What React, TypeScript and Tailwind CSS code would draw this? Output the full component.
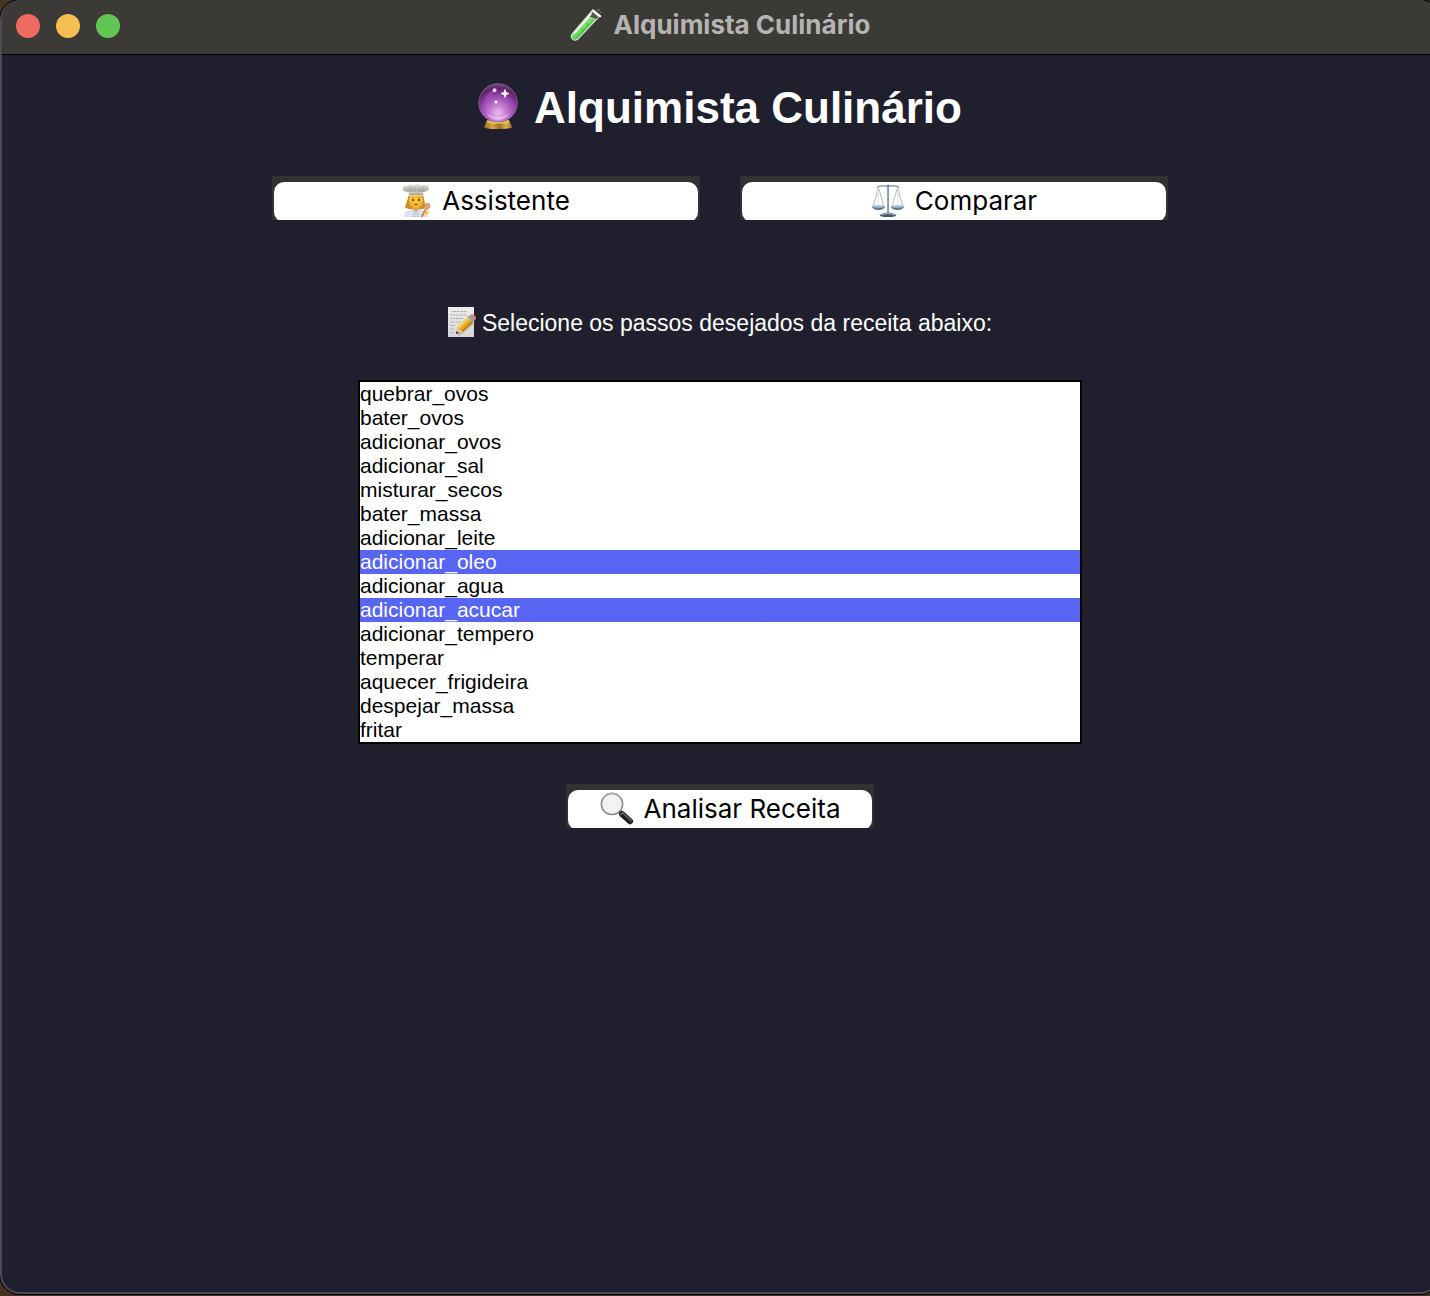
import type { ReactNode } from "react";

const STEPS = [
  "quebrar_ovos",
  "bater_ovos",
  "adicionar_ovos",
  "adicionar_sal",
  "misturar_secos",
  "bater_massa",
  "adicionar_leite",
  "adicionar_oleo",
  "adicionar_agua",
  "adicionar_acucar",
  "adicionar_tempero",
  "temperar",
  "aquecer_frigideira",
  "despejar_massa",
  "fritar",
];

function TestTube() {
  return (
    <svg viewBox="0 0 32 34" className="h-[34px] w-8 shrink-0" aria-hidden="true">
      <defs>
        <linearGradient id="tube" x1="0" y1="0" x2="1" y2="1">
          <stop offset="0.3" stopColor="#b5f5a6" />
          <stop offset="0.55" stopColor="#52c545" />
          <stop offset="0.7" stopColor="#8ee584" />
        </linearGradient>
      </defs>
      <path d="M22 2 L30 8.5 L8.5 31.2 Q5.5 34 2.2 31.5 Q-0.6 28.8 2 25.3 Z" fill="#dce5dd" />
      <path d="M17.2 9.5 L26.3 10.6 L8.2 30.2 Q5 32.8 2.6 30.9 Q0.9 28.6 2.9 25.8 Z" fill="url(#tube)" />
      <path d="M22.5 4 L28.5 9 L26.5 11 L19 8.7 Z" fill="#525750" />
      <path d="M23 2.2 L30.3 8.3" stroke="#f4f7f4" strokeWidth="2" strokeLinecap="round" />
      <path d="M21.5 5.5 L4.5 25.5" stroke="#f2fff0" strokeWidth="1.2" />
      <path d="M16.5 15.5 l2 1.4 M12 22 l1.5 1" stroke="#4dae48" strokeWidth="1.3" />
      <circle cx="28.7" cy="2" r="1.3" fill="#4e7b49" />
      <circle cx="30.7" cy="4.4" r="0.9" fill="#577b50" />
    </svg>
  );
}

function CrystalBall() {
  return (
    <svg viewBox="0 0 40 48" className="h-12 w-10 shrink-0" aria-hidden="true">
      <defs>
        <radialGradient id="orb" cx="0.5" cy="0.76" r="0.78">
          <stop offset="0" stopColor="#e9bdf0" />
          <stop offset="0.28" stopColor="#c47ad2" />
          <stop offset="0.55" stopColor="#9a4ab0" />
          <stop offset="0.82" stopColor="#5f2269" />
          <stop offset="1" stopColor="#6f567f" />
        </radialGradient>
        <linearGradient id="brass" x1="0" y1="0" x2="1" y2="0">
          <stop offset="0" stopColor="#8c621e" />
          <stop offset="0.3" stopColor="#e0b14e" />
          <stop offset="0.55" stopColor="#8f691f" />
          <stop offset="0.8" stopColor="#e6bd58" />
          <stop offset="1" stopColor="#96691f" />
        </linearGradient>
      </defs>
      <path d="M9 37 L31 37 L34 44 Q34 46 20 46 Q6 46 6 44 Z" fill="url(#brass)" />
      <path d="M8 42 Q20 45 32 42" fill="none" stroke="#bf8d35" strokeWidth="1.2" />
      <circle cx="20" cy="20" r="19.3" fill="url(#orb)" stroke="#80658f" strokeWidth="0.8" />
      <path d="M7 17 Q10 7 20 5 Q12 12 13 23 Q9 26 7 17Z" fill="#b95bc5" opacity="0.35" />
      <path d="M8 30 Q20 38 32 30 Q27 37 20 37.5 Q13 37 8 30Z" fill="#fbe3fb" opacity="0.45" />
      <path d="M9 38.5 Q20 41.5 31 38.5" fill="none" stroke="#e8c261" strokeWidth="1.6" />
      <path d="M27 6.5 L28 9.5 L31 10.5 L28 11.5 L27 14.5 L26 11.5 L23 10.5 L26 9.5Z" fill="#fff" stroke="#fff" strokeWidth="0.8" />
      <circle cx="16.5" cy="7.2" r="1.9" fill="#f8d7f8" />
      <circle cx="18" cy="19" r="1.6" fill="#fff" />
    </svg>
  );
}

function Chef() {
  return (
    <svg viewBox="0 0 30 34" className="h-[34px] w-[30px] shrink-0" aria-hidden="true">
      <defs>
        <linearGradient id="hat" x1="0" y1="0" x2="0" y2="1">
          <stop offset="0" stopColor="#e2e2df" />
          <stop offset="1" stopColor="#a5a5a1" />
        </linearGradient>
        <linearGradient id="face" x1="0" y1="0" x2="0" y2="1">
          <stop offset="0" stopColor="#fbd043" />
          <stop offset="1" stopColor="#f2b02a" />
        </linearGradient>
      </defs>
      <path d="M6.5 12 Q5 18 3.5 21 L3 23.5 Q8 26 12 24.5 L16 24.5 Q20 26 25 23.5 Q22.5 20 21.5 12Z" fill="#c98c27" />
      <path d="M2 33 Q2 27 7 26 L11 25 H17 L21 26 Q26 27 26.5 33Z" fill="#dfe2e8" />
      <path d="M11 22 H17 V26 L14 28.5 L11 26Z" fill="#e7a21e" />
      <path d="M10 25 L14 28.5 L18 25" fill="none" stroke="#c3cde0" strokeWidth="1.8" />
      <ellipse cx="14" cy="16.8" rx="7" ry="7.6" fill="url(#face)" />
      <path d="M6.5 11 L7 6 H21 L21.5 11 Q14 9.5 6.5 11Z" fill="#c4c4c0" />
      <path d="M7 8 Q1 8 .5 4.5 Q1 1 5.5 1.8 Q8 -.2 12 1 Q16 -.5 19 1.2 Q25 0 27 3 Q28 7 21 8 Q14 6 7 8Z" fill="url(#hat)" />
      <path d="M8 3 L10 8 M13 3 V8 M18 3 L17 8 M22 3 L20 8" stroke="#999" strokeWidth="0.8" />
      <path d="M6.8 10.8 Q14 9 21.2 10.8" fill="none" stroke="#92928c" strokeWidth="0.9" />
      <circle cx="11" cy="16" r="1.1" fill="#4b3210" />
      <circle cx="17" cy="16" r="1.1" fill="#4b3210" />
      <path d="M9.5 13.8 Q11 13 12.5 13.8 M15.5 13.8 Q17 13 18.5 13.8" fill="none" stroke="#ad7620" strokeWidth="0.7" />
      <path d="M11.6 19.7 Q14 20.8 16.4 19.7 Q14 23 11.6 19.7Z" fill="#9c3522" />
      <circle cx="12.3" cy="30" r="0.6" fill="#536f9d" />
      <circle cx="15.7" cy="30" r="0.6" fill="#536f9d" />
      <circle cx="12.3" cy="32.3" r="0.5" fill="#536f9d" />
      <circle cx="15.7" cy="32.3" r="0.5" fill="#536f9d" />
      <path d="M24.5 24 L19.5 33" stroke="#c98454" strokeWidth="1.8" />
      <ellipse cx="25.3" cy="22.5" rx="2.9" ry="3.7" transform="rotate(28 25.3 22.5)" fill="#dba076" />
      <path d="M22 28.5 Q25 26 26.5 27.5 L25.5 30 Q23 31 22 28.5Z" fill="#f6be32" />
    </svg>
  );
}

function Scales() {
  return (
    <svg viewBox="0 0 34 34" className="h-[34px] w-[34px] shrink-0" aria-hidden="true">
      <defs>
        <linearGradient id="steel" x1="0" y1="0" x2="1" y2="0">
          <stop offset="0" stopColor="#5d748a" />
          <stop offset="0.5" stopColor="#cbd9e8" />
          <stop offset="1" stopColor="#4a6077" />
        </linearGradient>
      </defs>
      <path d="M7.5 3.5 L2 23 M7.5 3.5 L13 23 M26.5 3.5 L21 23 M26.5 3.5 L32 23" stroke="#a0a9b3" strokeWidth="0.8" />
      <path d="M7.5 4 V22 M26.5 4 V22" stroke="#dce1e6" strokeWidth="0.7" />
      <path d="M6 3.2 Q10 1.2 17 2.2 Q24 1.2 28 3.2" fill="none" stroke="#7b8c9b" strokeWidth="1.2" />
      <path d="M16 3 H18 V30 H16Z" fill="url(#steel)" />
      <circle cx="17" cy="2" r="1.6" fill="#71889d" />
      <path d="M.5 22.5 Q7.5 21 14.5 22.5 Q12.5 26 7.5 26 Q2.5 26 .5 22.5Z M19.5 22.5 Q26.5 21 33.5 22.5 Q31.5 26 26.5 26 Q21.5 26 19.5 22.5Z" fill="#5e7488" />
      <ellipse cx="7.5" cy="22.5" rx="6.7" ry="1.3" fill="#a9bac9" />
      <ellipse cx="26.5" cy="22.5" rx="6.7" ry="1.3" fill="#a9bac9" />
      <path d="M12 29.5 Q17 27.5 22 29.5 L25 31 Q26 33 17 33 Q8 33 9 31Z" fill="#4b5d6f" />
      <path d="M11 30.5 Q17 28 23 30.5" fill="none" stroke="#a5b7c7" strokeWidth="1" />
    </svg>
  );
}

function Memo() {
  return (
    <svg viewBox="0 0 28 30" className="h-[30px] w-7 shrink-0" aria-hidden="true">
      <defs>
        <linearGradient id="paper" x1="0" y1="0" x2="0" y2="1">
          <stop offset="0" stopColor="#eeeeee" />
          <stop offset="1" stopColor="#d4d6d4" />
        </linearGradient>
      </defs>
      <path d="M0 0 H26 V30 H0Z" fill="url(#paper)" />
      <path d="M4 4.5 H12 M13 4.5 H19 M2.5 8 H10 M11 8 H19 M2.5 11.5 H15 M2.5 15 H13 M2.5 18.5 H7 M2.5 22 H6 M3 25.5 H6" stroke="#a4a7a7" strokeWidth="1" strokeDasharray="2 0.7" />
      <path d="M10 28 L25 16" stroke="#b9bbb8" strokeWidth="3" />
      <path d="M8 26.5 L9.8 20 L20.6 9.2 L26 14.5 L15 25Z" fill="#e3a72e" />
      <path d="M10.5 20.7 L21.5 10.3" stroke="#f6ce57" strokeWidth="2.5" />
      <path d="M14.5 24 L25 14" stroke="#b97516" strokeWidth="1.5" />
      <path d="M8 27 L9.7 20.5 L14.3 25Z" fill="#edc78e" />
      <path d="M8 27 L8.7 24 L11 26Z" fill="#292925" />
      <path d="M19.8 10.2 L22 8 L27 13 L24.8 15.3Z" fill="#8eaaad" />
      <path d="M21.8 8.2 Q25 6 27 9 Q29.5 11 26.7 13.2Z" fill="#e17982" />
    </svg>
  );
}

function Magnifier() {
  return (
    <svg viewBox="0 0 34 34" className="h-[34px] w-[34px] shrink-0" aria-hidden="true">
      <defs>
        <radialGradient id="lens">
          <stop offset="0" stopColor="#f5f5f5" />
          <stop offset="0.8" stopColor="#f0f0f0" />
          <stop offset="1" stopColor="#dce4ea" />
        </radialGradient>
      </defs>
      <path d="M19 19.5 L23 23.5" stroke="#777b7e" strokeWidth="2.5" />
      <circle cx="12" cy="12" r="10.7" fill="url(#lens)" stroke="#7d8082" strokeWidth="1.3" />
      <path d="M2.8 6.5 Q6 0.8 12 1 Q18 1 21.3 6.5" fill="none" stroke="#a5b8ca" strokeWidth="1" />
      <path d="M22 22 L30 29.3" stroke="#202429" strokeWidth="6" strokeLinecap="round" />
      <path d="M22.7 21 L31 28.5" stroke="#656b72" strokeWidth="1.4" strokeLinecap="round" />
      <path d="M20 23.2 L23.2 20" stroke="#8b9298" strokeWidth="1" />
    </svg>
  );
}

function ActionButton({ icon, children }: { icon: ReactNode; children: ReactNode }) {
  return (
    <button type="button" className="block h-11 w-full overflow-hidden bg-[#323232] px-0.5 pt-1.5">
      <span className="flex h-10 items-center justify-center gap-2.5 rounded-[10px] bg-white pb-0.5 font-[Inter,sans-serif] text-[26px] leading-8 text-black">
        {icon}
        <span>{children}</span>
      </span>
    </button>
  );
}

export default function App() {
  return (
    <div className="h-screen overflow-hidden bg-[#443421]">
      <div className="flex h-[calc(100%-2px)] w-[calc(100%+10px)] flex-col overflow-hidden rounded-[20px] border-2 border-t-0 border-[#4b4a57] bg-[#201f2d] font-['Liberation_Sans',Arial,sans-serif] ring-1 ring-black">
        <header className="grid h-[55px] shrink-0 grid-cols-[1fr_auto_1fr] items-center border-b border-black bg-[#3c3a37] pb-1">
          <div className="flex gap-4 pt-0.5 pl-3.5">
            <button type="button" aria-label="Fechar" className="size-6 rounded-full bg-[#ed6b60]" />
            <button type="button" aria-label="Minimizar" className="size-6 rounded-full bg-[#f5be50]" />
            <button type="button" aria-label="Ampliar" className="size-6 rounded-full bg-[#62c655]" />
          </div>
          <div className="flex items-center gap-3 font-[Inter,sans-serif] text-[26px] leading-8 font-bold text-[#b5b4b2]">
            <TestTube />
            <span>Alquimista Culinário</span>
          </div>
        </header>

        <main className="flex flex-col items-center">
          <h1 className="mt-[25px] flex items-center gap-4 text-[44px] leading-[52px] font-bold text-white">
            <CrystalBall />
            <span className="pt-0.5">Alquimista Culinário</span>
          </h1>

          <nav className="mt-[42px] grid w-full max-w-[896px] grid-cols-2 gap-10">
            <ActionButton icon={<Chef />}>Assistente</ActionButton>
            <ActionButton icon={<Scales />}>Comparar</ActionButton>
          </nav>

          <label htmlFor="passos" className="mt-[85px] flex items-center gap-1.5 text-[23px] leading-8 text-white">
            <Memo />
            <span className="pt-0.5">Selecione os passos desejados da receita abaixo:</span>
          </label>

          <select
            id="passos"
            multiple
            size={15}
            defaultValue={["adicionar_oleo", "adicionar_acucar"]}
            className="mt-[41px] h-[364px] w-full max-w-[724px] appearance-none overflow-hidden border-2 border-black bg-white p-0 text-[21px] leading-6 text-black outline-none"
          >
            {STEPS.map((step) => (
              <option
                key={step}
                value={step}
                className="h-6 min-h-0 p-0 leading-6 checked:bg-[#5865f2] checked:bg-linear-to-r checked:from-[#5865f2] checked:to-[#5865f2] checked:text-white"
              >
                {step}
              </option>
            ))}
          </select>

          <div className="mt-10 w-[308px]">
            <ActionButton icon={<Magnifier />}>Analisar Receita</ActionButton>
          </div>
        </main>
      </div>
    </div>
  );
}
